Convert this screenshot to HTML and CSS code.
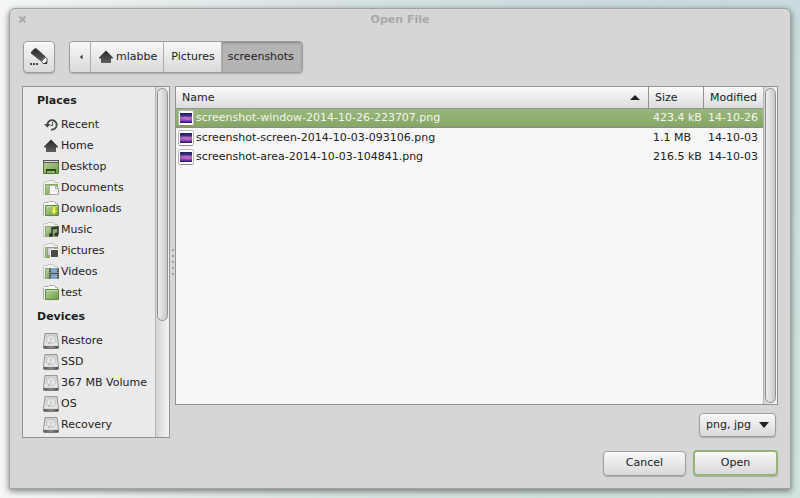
FILE: index.html
```html
<!DOCTYPE html>
<html lang="en">
<head>
<meta charset="utf-8">
<title>Open File</title>
<link rel="stylesheet" href="styles.css">
</head>
<body>
<svg class="defs" aria-hidden="true">
  <defs>
    <linearGradient id="dark" x1="0" y1="0" x2="0" y2="1"><stop offset="0" stop-color="#262626"/><stop offset="1" stop-color="#606060"/></linearGradient>
    <linearGradient id="green" x1="0" y1="0" x2="1" y2="1"><stop offset="0" stop-color="#b9d49a"/><stop offset="1" stop-color="#6b9a45"/></linearGradient>
    <linearGradient id="metal" x1="0" y1="0" x2="0" y2="1"><stop offset="0" stop-color="#cfcfcf"/><stop offset="1" stop-color="#e9e9e9"/></linearGradient>
    <linearGradient id="base" x1="0" y1="0" x2="1" y2="0"><stop offset="0" stop-color="#555"/><stop offset=".5" stop-color="#8a8a8a"/><stop offset="1" stop-color="#4a4a4a"/></linearGradient>
    <linearGradient id="purple" x1="0" y1="0" x2="0" y2="1"><stop offset="0" stop-color="#1a2058"/><stop offset=".25" stop-color="#3a2c88"/><stop offset=".5" stop-color="#c070c4"/><stop offset=".75" stop-color="#8644b4"/><stop offset="1" stop-color="#1e1260"/></linearGradient>
    <symbol id="home" viewBox="0 0 16 16"><path fill="url(#dark)" d="M8 1.500 1 8.500v1h2V14h10V9.500h2v-1z"/></symbol>
    <symbol id="folder" viewBox="0 0 16 16"><path fill="#fafafa" stroke="#a9aca6" d="M.5 14.500V2.500l1-1h4l1-1h5l1 1v1h2v3"/><path fill="url(#green)" stroke="#5f8a3c" d="M2.500 4.500h13v10h-13z"/><path stroke="#c6dcae" d="M3 5.500h12"/></symbol>
    <symbol id="back-folder" viewBox="0 0 16 16"><path fill="#f0f0f0" stroke="#c2c4c0" d="M.5 14.500V2.500l1-1h3l1-1h5l1 1v1h3v12z"/><path fill="url(#green)" stroke="#86a968" d="M2.500 4.500h12v10h-12z"/></symbol>
    <symbol id="drive" viewBox="0 0 16 16"><path fill="url(#metal)" stroke="#979797" d="M2 .5h12l1.500 12H.5z"/><rect x=".5" y="12.500" width="15" height="3" rx="1" fill="url(#base)" stroke="#777"/><path stroke="#d8d8d8" d="M1 12.500h14"/><ellipse cx="8" cy="6.500" rx="4.500" ry="4" fill="#e8e8e8" stroke="#c2c2c2"/><circle cx="8" cy="6" r="1" fill="#fff" stroke="#c0c0c0"/><path stroke="#b0b0b0" d="m5 11 3-3"/></symbol>
    <symbol id="thumb" viewBox="0 0 16 16"><rect x=".5" y=".5" width="15" height="15" rx="1.500" fill="#fff" stroke="#bababa"/><path stroke="#888" d="M1.500 15.500h13"/><path fill="url(#purple)" d="M2 3h12v10H2z"/><path fill="#e68bb8" d="M5 7h5v1H5zm3 2h4v1H8z" opacity=".5"/></symbol>
  </defs>
</svg>
<main class="window">
  <header class="titlebar">
    <button class="close" type="button" aria-label="Close"><svg viewBox="0 0 7 7" width="7" height="7"><path d="m.5.500 6 6m0-6-6 6" stroke="#a9a9a9" stroke-width="2"/></svg></button>
    <h1>Open File</h1>
  </header>
  <div class="content">
    <div class="toolbar">
      <button class="btn edit" type="button" aria-label="Type a file name"><svg viewBox="0 0 20 20" width="20" height="20"><path fill="url(#dark)" d="M2 5 5.500 1.500q1-.700 2 0l9 8-4.500 5L2 6.500z"/><path fill="#f8f8f8" stroke="#555" d="m16.500 10-4 4.500 1.500 2h3l1-1v-4z"/><path fill="#222" d="m18 14-3 3h2.500l.5-.5z"/><path stroke="#444" stroke-width="2" stroke-dasharray="2 1" d="M1 17h8"/></svg></button>
      <nav class="path" aria-label="Path">
        <button class="back" type="button" aria-label="Back"><svg viewBox="0 0 4 6" width="4" height="6"><path fill="#333" d="M3.500.500v5L1 3z"/></svg></button>
        <button type="button"><svg class="icon"><use href="#home"/></svg>mlabbe</button>
        <button type="button">Pictures</button>
        <button class="current" type="button" aria-current="page">screenshots</button>
      </nav>
    </div>
    <div class="panes">
      <aside class="sidebar">
        <div class="places">
          <h2>Places</h2>
          <ul>
            <li><a href="#"><svg class="icon" viewBox="0 0 16 16"><path d="M4.300 7.500a4.700 4.700 0 1 1 3.700 5" stroke="#4a4a4a" stroke-width="1.800"/><path fill="#444" d="M1 7h6.500L4.300 10.500z"/><path stroke="#555" d="M9.500 5v3.500H7.500"/></svg>Recent</a></li>
            <li><a href="#"><svg class="icon"><use href="#home"/></svg>Home</a></li>
            <li><a href="#"><svg class="icon" viewBox="0 0 16 16"><path fill="url(#green)" stroke="#4f7a30" d="M.5 2.500h15v12H.5z"/><path fill="#555" d="M0 1h16v3H0z"/><path stroke="#ddd" d="M1 2.500h14"/><path fill="#33461f" d="M3 10h10v4H3z"/><path fill="#91b86d" d="M4 12h8v2H4z"/></svg>Desktop</a></li>
            <li><a href="#"><svg class="icon" viewBox="0 0 16 16"><use href="#back-folder"/><path fill="#f8f8f8" stroke="#aaa" d="M6.500 5.500h6l3 3v6h-9z"/><path stroke="#aaa" d="M12.500 5.500v3h3"/></svg>Documents</a></li>
            <li><a href="#"><svg class="icon" viewBox="0 0 16 16"><use href="#folder"/><path fill="#eff45e" stroke="#bcc83b" d="M9.500 5.500h3v4h2L11 13.500 7.500 9.500h2z"/></svg>Downloads</a></li>
            <li><a href="#"><svg class="icon" viewBox="0 0 16 16"><use href="#back-folder"/><path d="M9 13V6l6-1v7M9 7l6-1" stroke="#3a3a3a" stroke-width="1.600"/><circle cx="8" cy="13" r="2" fill="#333"/><circle cx="13.500" cy="12.500" r="2" fill="#333"/></svg>Music</a></li>
            <li><a href="#"><svg class="icon" viewBox="0 0 16 16"><use href="#back-folder"/><path fill="#d0d0d0" stroke="#999" d="M4.500 4.500h7v8h-7z"/><path fill="#4a4a4a" stroke="#f4f4f4" d="M7.500 6.500h8v8h-8z"/></svg>Pictures</a></li>
            <li><a href="#"><svg class="icon" viewBox="0 0 16 16"><use href="#back-folder"/><path fill="#4a4a4a" d="M6 4h10v11H6z"/><path fill="#7ba6c4" d="M8 4h6v5H8zm0 6h6v5H8z"/><path stroke="#bbb" stroke-dasharray="1 1" d="M7 4v11M15 4v11"/></svg>Videos</a></li>
            <li><a href="#"><svg class="icon"><use href="#folder"/></svg>test</a></li>
          </ul>
          <h2>Devices</h2>
          <ul>
            <li><a href="#"><svg class="icon"><use href="#drive"/></svg>Restore</a></li>
            <li><a href="#"><svg class="icon"><use href="#drive"/></svg>SSD</a></li>
            <li><a href="#"><svg class="icon"><use href="#drive"/></svg>367 MB Volume</a></li>
            <li><a href="#"><svg class="icon"><use href="#drive"/></svg>OS</a></li>
            <li><a href="#"><svg class="icon"><use href="#drive"/></svg>Recovery</a></li>
          </ul>
        </div>
        <div class="track"><div class="thumb part"></div></div>
      </aside>
      <div class="grip"><i></i><i></i><i></i><i></i><i></i></div>
      <section class="browser">
        <div class="files">
          <div class="list">
            <table>
              <thead><tr><th class="name"><div class="sort">Name<svg viewBox="0 0 10 6" width="10" height="6"><path fill="#222" d="M5 0l5 5H0z"/></svg></div></th><th class="size">Size</th><th class="date">Modified</th></tr></thead>
              <tbody>
                <tr class="selected"><td><div class="file"><svg class="icon"><use href="#thumb"/></svg>screenshot-window-2014-10-26-223707.png</div></td><td>423.4 kB</td><td>14-10-26</td></tr>
                <tr><td><div class="file"><svg class="icon"><use href="#thumb"/></svg>screenshot-screen-2014-10-03-093106.png</div></td><td>1.1 MB</td><td>14-10-03</td></tr>
                <tr><td><div class="file"><svg class="icon"><use href="#thumb"/></svg>screenshot-area-2014-10-03-104841.png</div></td><td>216.5 kB</td><td>14-10-03</td></tr>
              </tbody>
            </table>
          </div>
          <div class="track"><div class="thumb"></div></div>
        </div>
        <div class="filter">
          <select class="btn" aria-label="File type"><option>png, jpg</option></select>
          <svg viewBox="0 0 10 6" width="10" height="6"><path fill="#222" d="M0 0h10L5 6z"/></svg>
        </div>
      </section>
    </div>
    <footer class="actions">
      <button class="btn" type="button">Cancel</button>
      <button class="btn default" type="submit">Open</button>
    </footer>
  </div>
</main>
</body>
</html>
```
FILE: styles.css
```css
* { box-sizing: border-box; }
body {
  margin: 0;
  min-height: 100vh;
  padding: 8px 9px 9px;
  display: flex;
  font: 11px/14px "DejaVu Sans", sans-serif;
  color: #222;
  background:
    linear-gradient(135deg, transparent 45%, rgba(214, 232, 222, .8)),
    linear-gradient(90deg, #f4f7f6 0%, #d6e1e2 45%, #c5d7dc 90%);
}
svg { fill: none; flex: none; }
.defs { position: absolute; width: 0; height: 0; }
.icon { width: 16px; height: 16px; }
button, select { font: inherit; color: inherit; margin: 0; }
h1, h2, ul { margin: 0; padding: 0; font-size: 11px; }
ul { list-style: none; }

.window {
  flex: 1;
  display: flex;
  flex-direction: column;
  background: #d6d6d6;
  border: 1px solid #a3a3a3;
  border-radius: 6px 6px 0 0;
  box-shadow: 0 2px 6px rgba(0, 0, 0, .5);
}
.titlebar {
  display: grid;
  grid-template-columns: 24px 1fr 24px;
  align-items: center;
  height: 21px;
  text-align: center;
  color: #a9a9a9;
}
.close { display: flex; justify-content: center; padding: 0; border: 0; background: none; }
.content { flex: 1; display: flex; flex-direction: column; padding: 11px 12px 12px; }

.btn {
  border: 1px solid #9c9c9c;
  border-radius: 4px;
  background: linear-gradient(#f8f8f8, #d9d9d9);
  box-shadow: 0 1px 1px rgba(0, 0, 0, .2), inset 0 1px #fff;
}
.toolbar { display: flex; gap: 14px; padding-left: 1px; margin-bottom: 13px; }
.edit { display: flex; align-items: center; justify-content: center; width: 32px; height: 32px; padding: 0; }
.path {
  display: flex;
  height: 32px;
  border: 1px solid #9c9c9c;
  border-radius: 4px;
  box-shadow: 0 1px 1px rgba(0, 0, 0, .2);
  overflow: hidden;
}
.path button {
  display: flex;
  align-items: center;
  padding: 0 6px 0 7px;
  border: 0;
  border-right: 1px solid #adadad;
  background: linear-gradient(#f8f8f8, #d9d9d9);
}
.path .icon { margin-right: 2px; }
.path .back { width: 21px; padding: 0 9px; }
.path .current { padding: 0 8px 0 6px; border: 0; background: #b4b4b4; box-shadow: inset 0 1px 2px #8a8a8a; }

.panes { flex: 1; display: grid; grid-template-columns: 148px 5px 1fr; }
.sidebar { display: flex; border: 1px solid #929292; background: #eaeaea; }
.places { flex: 1; }
.places h2 { padding-left: 14px; line-height: 27px; color: #1e1e1e; }
.places a {
  display: flex;
  align-items: center;
  gap: 2px;
  height: 21px;
  padding-left: 20px;
  color: inherit;
  text-decoration: none;
}
.track {
  flex: none;
  display: flex;
  width: 14px;
  padding: 1px;
  border-left: 1px solid #b5b5b5;
  background: linear-gradient(90deg, #d4d4d4, #f4f4f4);
}
.thumb {
  flex: 1;
  border: 1px solid #8e8e8e;
  border-radius: 6px;
  background: linear-gradient(90deg, #eee, #c8c8c8);
}
.thumb.part { height: 67%; }
.grip { display: flex; flex-direction: column; align-items: center; justify-content: center; gap: 4px; }
.grip i { width: 2px; height: 2px; background: #a0a0a0; }

.browser { display: flex; flex-direction: column; gap: 8px; }
.files { flex: 1; display: flex; border: 1px solid #929292; background: #f7f7f7; }
.list { flex: 1; }
table { width: 100%; border-collapse: separate; border-spacing: 0; table-layout: fixed; }
th {
  height: 22px;
  padding: 0 6px;
  text-align: left;
  font-weight: normal;
  background: linear-gradient(#fbfbfb, #dcdcdc);
  border-right: 1px solid #929292;
  border-bottom: 1px solid #929292;
}
th.size { width: 55px; }
th.date { width: 59px; padding-right: 0; border-right: 0; }
.sort { display: flex; align-items: center; justify-content: space-between; padding-right: 2px; }
td { height: 19px; padding: 0 0 0 4px; white-space: nowrap; }
td:first-child { padding-left: 2px; }
.file { display: flex; align-items: center; gap: 2px; }
.selected td {
  color: #f4f7f0;
  background: linear-gradient(#9ab87c, #85a565);
  border-bottom: 1px solid #8b8b8b;
}
.filter { display: grid; justify-content: end; align-items: center; height: 24px; padding-right: 2px; margin-bottom: 1px; }
.filter > * { grid-area: 1 / 1; }
.filter select { appearance: none; height: 24px; width: 77px; padding: 0 6px; }
.filter svg { justify-self: end; margin-right: 7px; pointer-events: none; }
.actions { display: flex; justify-content: flex-end; align-items: center; gap: 7px; margin-top: 12px; }
.actions .btn { width: 83px; height: 25px; padding: 0; }
.actions .default { width: 85px; height: 26px; border: 2px solid #97b478; }
```
